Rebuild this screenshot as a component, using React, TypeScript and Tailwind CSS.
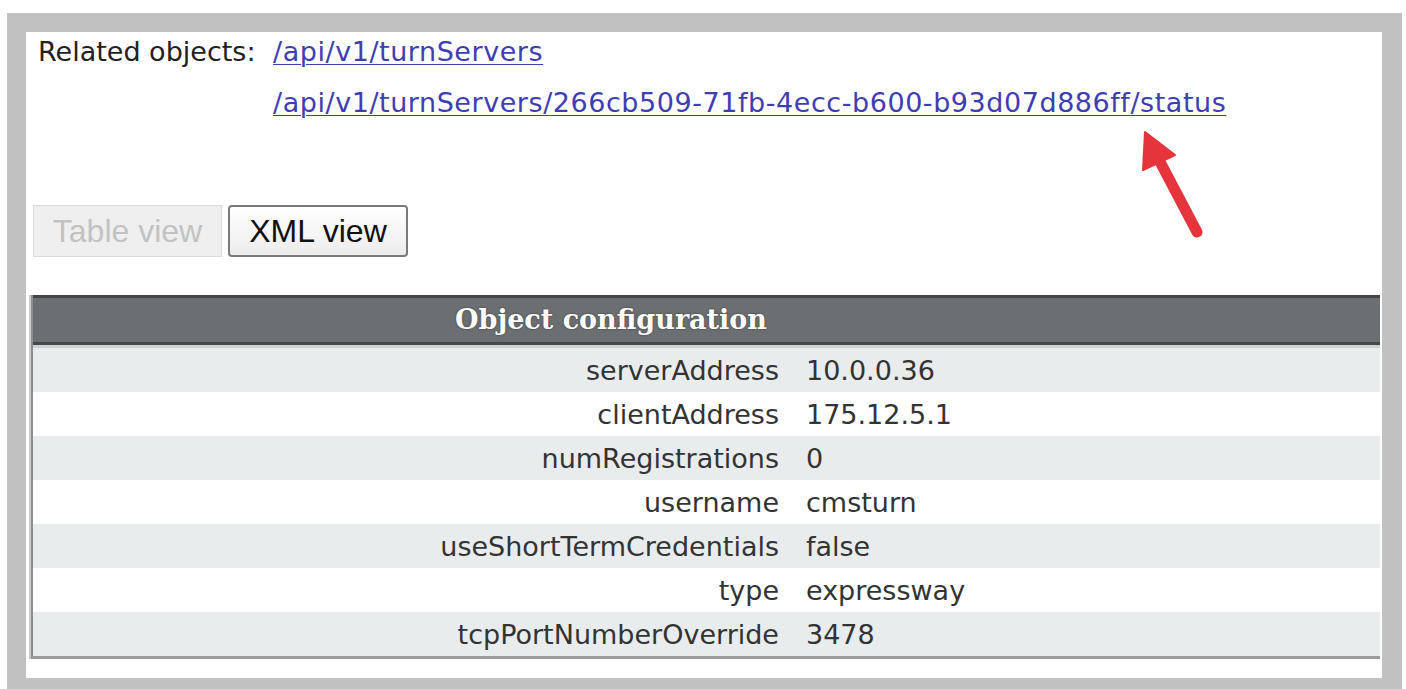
import React from 'react';

interface ConfigRow {
    name: string;
    value: string;
}

const rows: ConfigRow[] = [
    { name: 'serverAddress', value: '10.0.0.36' },
    { name: 'clientAddress', value: '175.12.5.1' },
    { name: 'numRegistrations', value: '0' },
    { name: 'username', value: 'cmsturn' },
    { name: 'useShortTermCredentials', value: 'false' },
    { name: 'type', value: 'expressway' },
    { name: 'tcpPortNumberOverride', value: '3478' },
];

const links = [
    '/api/v1/turnServers',
    '/api/v1/turnServers/266cb509-71fb-4ecc-b600-b93d07d886ff/status',
];

// red call-out arrow pointing at the status link
const Arrow: React.FC = () => (
    <svg
        className="absolute left-[1110px] top-[92px]"
        width="75"
        height="120"
        viewBox="0 0 75 120"
    >
        <line x1="22" y1="34" x2="61" y2="108" stroke="#e5343c" strokeWidth="11" strokeLinecap="round" />
        <polygon points="9,8 39,31 7,46" fill="#e5343c" stroke="#e5343c" strokeWidth="2" strokeLinejoin="round" />
    </svg>
);

export const App: React.FC = () => {
    return (
        <div className="w-[1406px] h-[689px] bg-white pl-[7px] pt-[13px] pr-[4px] overflow-hidden">
            <div className="w-[1395px] h-[676px] bg-[#c1c1c1] pl-[19px] pt-[19px] pr-[20px] pb-[11px]">
                <div className="relative w-[1356px] h-[646px] bg-white font-['DejaVu_Sans',sans-serif]">
                    {/* related objects */}
                    <div className="flex pl-[12px] pt-[4px] text-[27px] leading-[32px]">
                        <span className="w-[235px] shrink-0 text-[#222]">Related objects:</span>
                        <div className="flex flex-col gap-[19px]">
                            {links.map((href) => (
                                <a key={href} className="text-[#3e3eb2] underline decoration-1 underline-offset-[3px] tracking-[0.55px]">
                                    {href}
                                </a>
                            ))}
                        </div>
                    </div>

                    {/* view switch */}
                    <div className="flex gap-[6px] ml-[7px] mt-[86px] font-['Liberation_Sans',Arial,sans-serif] text-[32px]">
                        <button className="w-[189px] h-[52px] bg-[#efefef] border border-[#dcdcdc] text-[#c2c2c2]" disabled>
                            Table view
                        </button>
                        <button className="w-[180px] h-[52px] rounded-[4px] border-2 border-[#7a7a7a] bg-gradient-to-b from-white to-[#ececec] text-[#111]">
                            XML view
                        </button>
                    </div>

                    {/* object configuration table */}
                    <div className="ml-[3px] mr-[2px] mt-[38px] border-l-2 border-[#cbcbcb]">
                        <div className="border-l-2 border-[#8d8d8d] border-b-[3px] border-b-[#9c9c9c]">
                            <div className="h-[50px] flex items-center pl-[422px] bg-[#6b6f71] border-t-[3px] border-t-[#434546] border-b-[3px] border-b-[#47494b]">
                                <span className="font-['DejaVu_Serif',serif] font-bold text-[27px] text-white [text-shadow:0_0_2px_#333]">
                                    Object configuration
                                </span>
                            </div>
                            <div className="h-[3px] bg-[#cdd1d1]" />
                            {rows.map((row, idx) => (
                                <div
                                    key={row.name}
                                    className={`flex h-[44px] items-center pt-[3px] text-[27px] text-[#333] ${idx % 2 === 0 ? 'bg-[#e9ecec]' : 'bg-white'}`}
                                >
                                    <span className="w-[760px] shrink-0 pr-[14px] text-right">{row.name}</span>
                                    <span className="pl-[13px]">{row.value}</span>
                                </div>
                            ))}
                        </div>
                    </div>

                    <Arrow />
                </div>
            </div>
        </div>
    );
};

export default App;
